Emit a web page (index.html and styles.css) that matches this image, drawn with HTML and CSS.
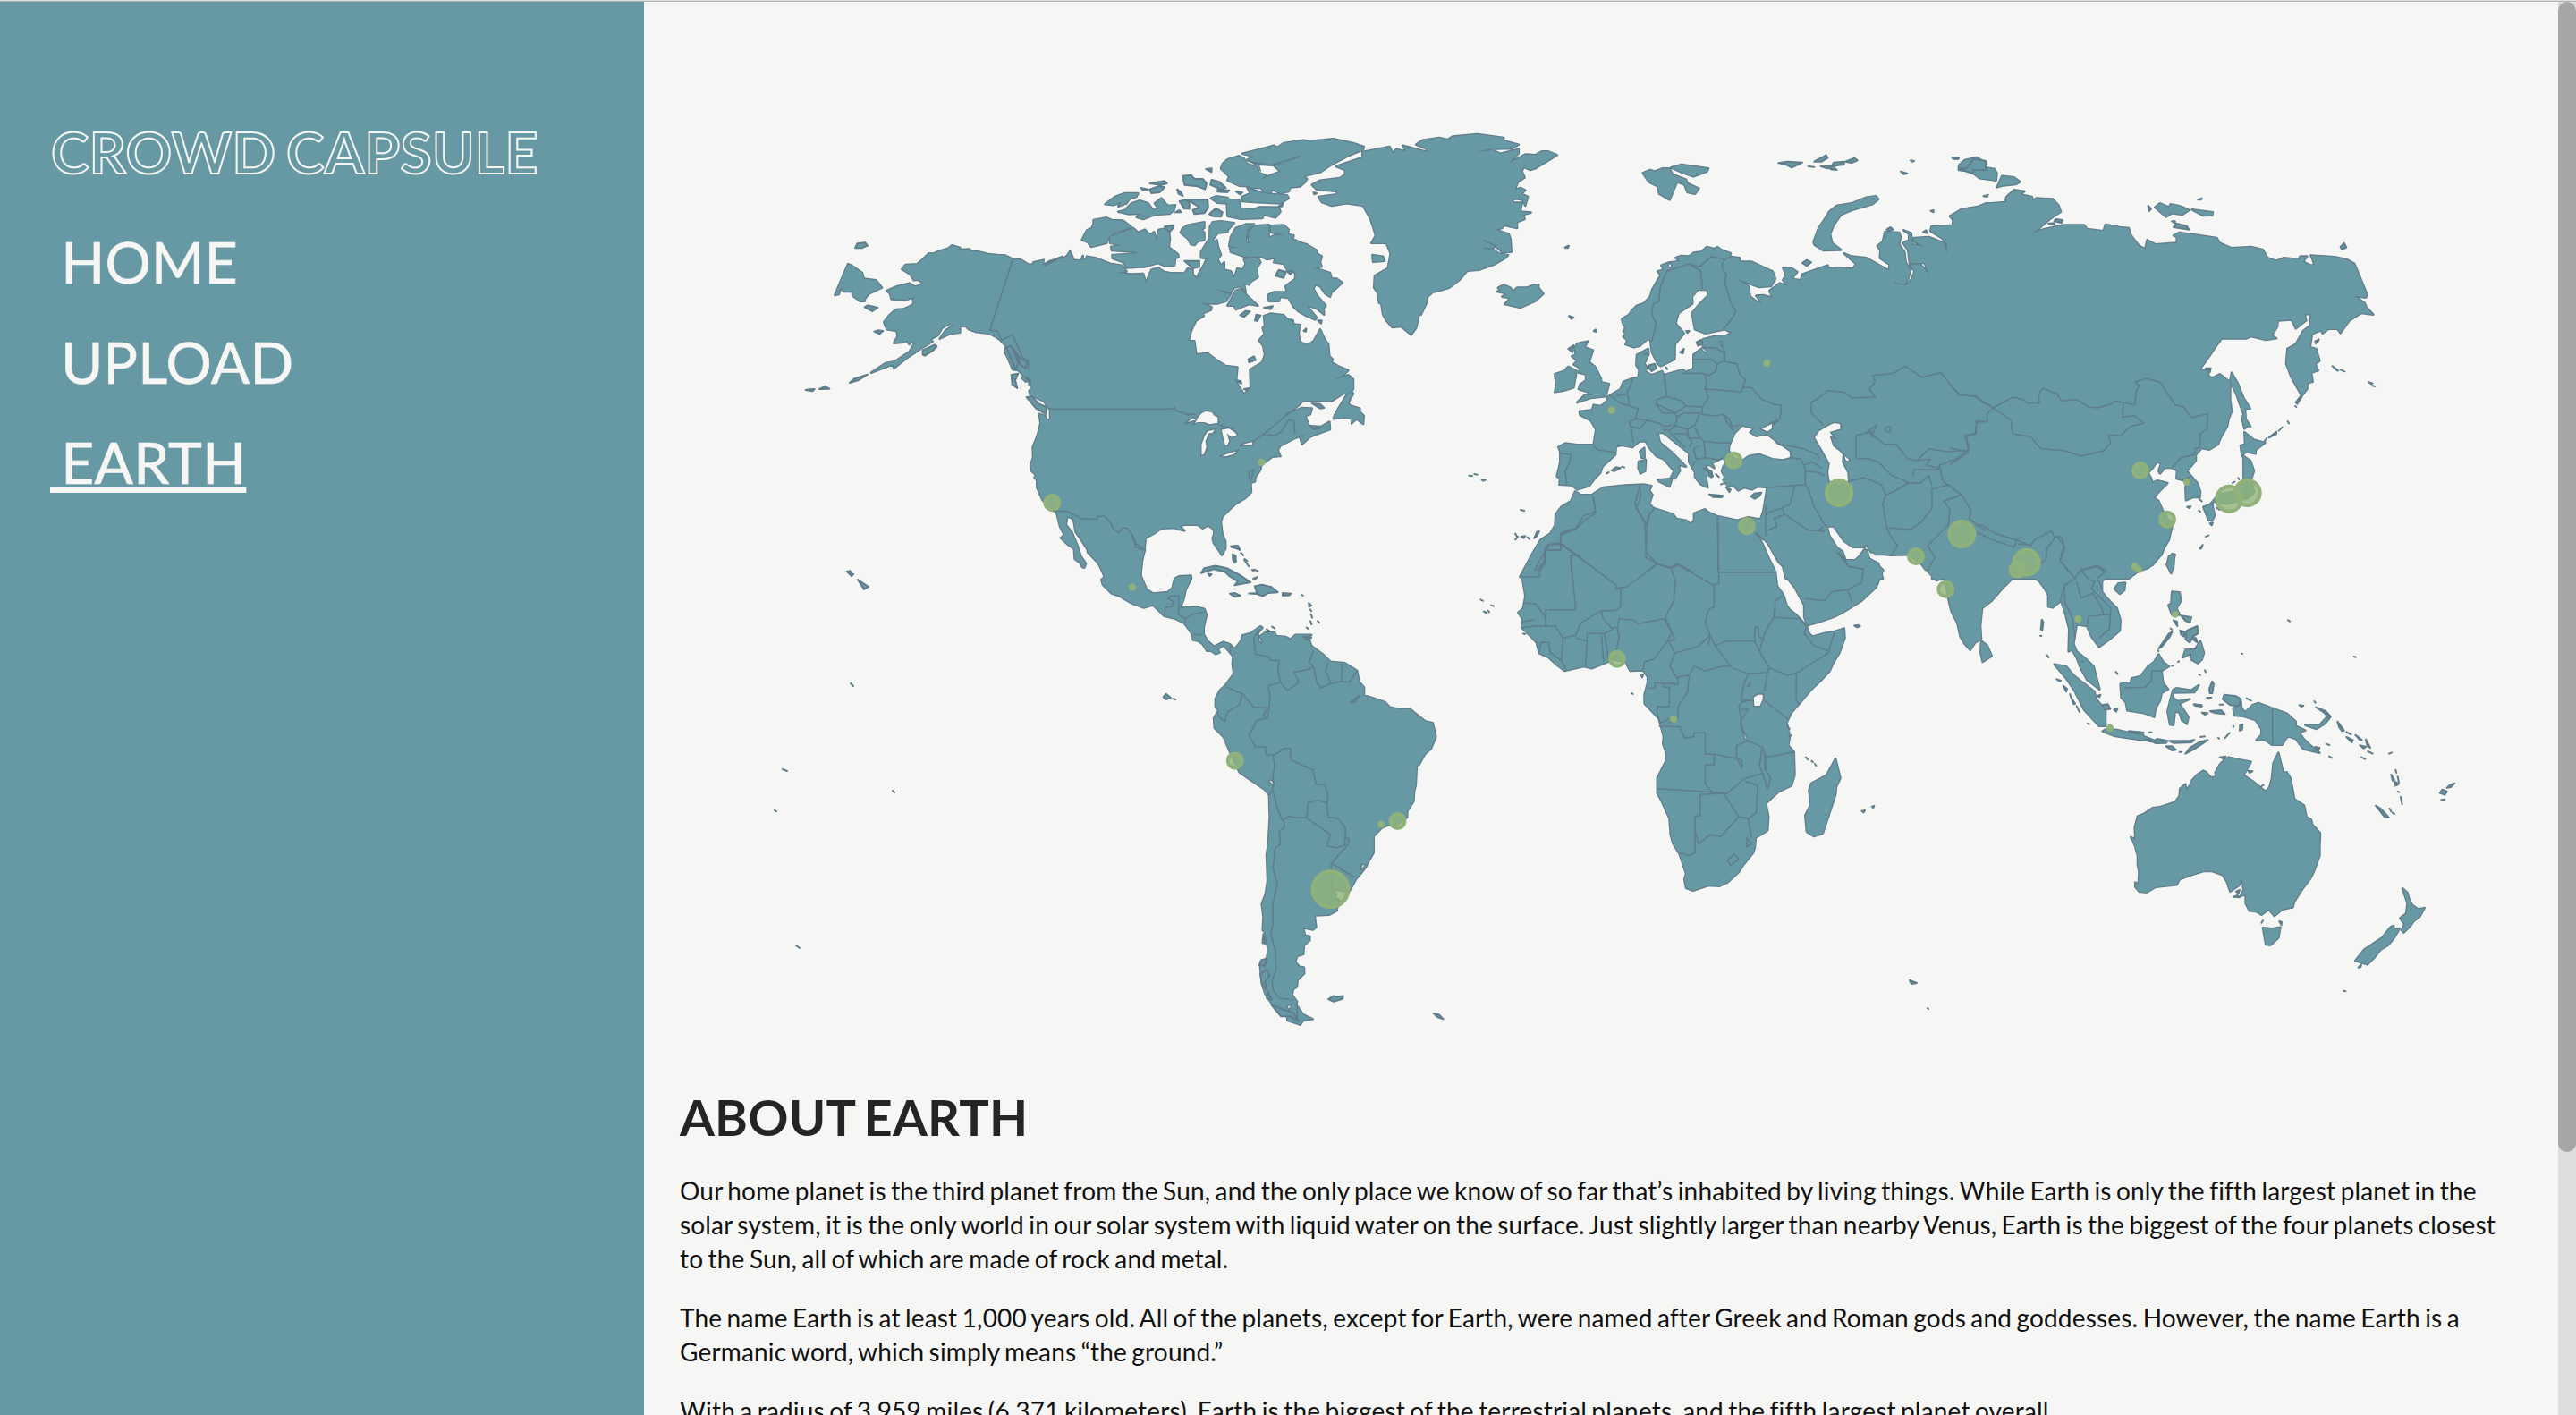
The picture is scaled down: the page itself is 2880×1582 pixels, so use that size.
FILE: index.html
```html
<!DOCTYPE html>
<html lang="en">
<head>
<meta charset="utf-8">
<title>Crowd Capsule - Earth</title>
<link rel="stylesheet" href="styles.css">
</head>
<body>
<div class="topline"></div>
<div class="page">
<aside class="sidebar">
  <h1 class="brand">CROWD CAPSULE</h1>
  <nav class="nav">
    <a class="nav-link">&nbsp;HOME</a>
    <a class="nav-link">&nbsp;UPLOAD</a>
    <a class="nav-link active">&nbsp;EARTH</a>
  </nav>
</aside>
<main class="content">
<svg class="map" viewBox="720 2 2140 1198">
<defs>
<g id="land" class="shape">
  <!-- Alaska, western Canada and the US -->
  <g transform="translate(880 140) scale(.33333)">
    <path d="M385 483 397 468 436 466 455 450 475 430 490 431 505 424 540 413 553 403 580 411 578 417 612 416 618 423 640 424 675 432 710 436 730 436 757 449 785 452 812 468 826 466 826 460 860 452 857 470 880 456 932 444 940 436 949 423 962 452 985 455 992 438 992 452 1010 445 1040 448 1075 464 1100 470V1380L1140 1400 1170 1400 1200 1424 1190 1460 1186 1500 1185 1530 1075 1530 1058 1492 1040 1465 1008 1432 1008 1415 990 1395 968 1365 960 1320 940 1312 935 1340 955 1365 974 1410 985 1445 1002 1470 997 1484 990 1482 985 1470 965 1455 962 1420 940 1405 918 1384 930 1375 915 1345 905 1305 900 1295 880 1290 862 1262 857 1258 838 1215 838 1190 830 1183 833 1172 820 1160 817 1138 825 1115 824 1080 840 1040 850 1000 845 968 865 975 872 993 882 985 882 955 860 925 815 905 812 890 825 880 812 870 818 850 800 860 790 850 792 838 775 822 757 820 740 780 730 760 733 740 712 718 700 710 675 698 635 694 610 685 600 675 580 673 580 695 545 700 512 716 530 690 560 668 545 666 520 680 505 705 480 718 488 725 440 755 400 782 358 815 355 802 282 830 330 798 360 793 410 760 425 735 420 723 410 735 400 722 390 728 358 731 370 708 368 690 335 685 330 675 325 660 345 635 365 618 390 617 410 608 424 600 422 585 430 575 400 585 350 583 345 565 335 555 370 540 410 530 430 542 457 532 440 518 425 520 413 500z"/>
    <path d="M204 466 215 470 252 495 258 520 262 515 298 520 318 545 275 565 262 580 260 590 245 590 220 572 218 558 190 558 178 545 174 567 160 570z"/>
  </g>
  <!-- Eastern North America, Arctic islands and Greenland -->
  <g transform="translate(1180 140) scale(.36990 .33333)">
    <path d="M60 453 90 455 95 440 120 445 165 464 200 470 215 490 190 495 230 500 265 498 275 534 280 510 290 485 310 478 330 492 345 495 390 497 400 480 415 485 415 500 430 515 432 500 448 470 460 440 470 400 488 385 492 410 500 435 490 450 500 470 510 460 510 485 530 490 540 512 550 480 565 485 575 465 570 450 590 442 615 450 620 460 608 480 612 510 590 525 585 535 570 530 575 560 560 540 540 545 530 562 505 555 485 548 515 565 530 566 515 590 490 598 478 598 437 597 472 610 470 620 445 632 448 640 425 655 410 690 403 724 420 724 425 768 460 765 490 790 515 807 550 812 546 860 570 903 590 880 588 820 625 795 633 770 628 740 615 722 632 700 626 680 633 672 630 640 650 632 690 637 700 650 718 655 720 668 740 670 735 695 738 725 758 738 765 735 780 725 800 685 815 720 825 735 828 775 838 785 835 795 855 808 885 822 870 838 838 857 885 838 900 852 900 885 885 900 870 900 835 925 748 925 735 940 705 965 690 985 710 965 745 948 775 950 770 970 755 975 765 1005 775 1015 805 1010 828 995 830 1020 770 1045 745 1070 740 1050 758 1035 720 1052 680 1075 672 1090 680 1110 655 1112 640 1125 622 1140 620 1155 605 1180 603 1195 590 1200 592 1230 575 1250 545 1270 525 1290 505 1312 500 1330 505 1375 514 1395 514 1420 503 1442 490 1420 478 1400 475 1385 480 1370 478 1355 462 1342 445 1352 430 1340 390 1340 375 1345 390 1360 372 1355 360 1350 320 1352 300 1368 272 1385 268 1424 262 1460 255 1530H155L110 1420 90 1330 60 1300z"/>
    <path d="M165 375 235 345 250 360 270 350 280 362 290 365 298 358 305 388 312 350 330 347 343 355 346 380 343 410 370 432 372 442 362 447 360 470 330 472 310 462 270 475 215 478 205 460 172 446 172 435 250 430 235 424 170 420 168 408 200 402 165 395z"/>
    <path d="M115 318 155 310 170 318 205 320 230 342 180 360 160 378 155 395 108 408 98 392 80 385 95 352 110 345 115 330z"/>
    <path d="M190 290 210 285 230 262 255 253 280 262 295 285 312 280 300 262 320 245 333 262 340 270 362 268 358 285 345 297 300 300 265 315 245 308 260 296 220 298z"/>
    <path d="M150 265 180 240 210 228 250 228 245 240 225 245 215 262 190 272 200 258 175 268z"/>
    <path d="M378 360 385 345 400 335 450 325 450 345 440 350 450 360 450 385 430 390 420 402 410 400 400 380z"/>
    <path d="M465 380 467 340 475 325 500 322 540 328 522 350 520 358 490 362 475 385 488 400 500 435 480 450 440 445 440 425z"/>
    <path d="M525 405 530 375 545 345 575 332 600 332 580 350 575 390 585 397 582 360 600 338 645 334 645 378 660 370 695 367 652 360 650 337 690 335 705 350 702 365 720 370 718 382 745 395 760 400 790 420 790 430 805 440 800 460 805 475 780 478 830 495 835 515 850 515 867 528 835 560 830 575 815 565 800 540 785 535 780 548 790 570 817 605 810 615 812 635 790 615 758 603 790 645 785 652 760 640 735 625 720 610 705 580 680 575 675 590 645 590 642 570 660 560 700 560 695 540 725 515 725 495 700 485 690 465 660 460 665 445 640 450 620 440 570 440 530 425 527 412 552 410z"/>
    <path d="M565 240 590 228 580 210 620 225 640 230 700 235 705 245 680 262 600 258 565 255z"/>
    <path d="M470 245 485 238 520 243 525 250 555 250 560 280 600 282 615 275 675 275 680 290 665 310 630 300 625 312 560 314 520 305 518 262 490 260z"/>
    <path d="M500 145 505 130 520 115 555 103 570 112 580 130 610 140 615 160 635 168 600 205 555 203 520 185 525 172z"/>
    <path d="M565 95 620 80 660 68 670 75 690 60 750 50 765 54 840 46 900 60 932 72 930 82 880 105 830 135 800 158 750 170 760 180 755 190 740 205 710 208 705 222 680 228 655 215 650 228 630 225 622 210 590 210 585 200 640 172 680 155 660 135 715 128 650 133 605 130 580 115 600 105z"/>
    <path d="M848 138 928 108 928 90 1010 72 1020 95 1030 80 1060 88 1050 68 1125 90 1120 78 1090 65 1110 50 1160 42 1185 48 1200 38 1275 30 1355 42 1350 50 1400 65 1380 78 1310 80 1265 92 1320 84 1345 95 1400 80 1400 95 1368 128 1420 98 1450 100 1470 88 1490 88 1516 100 1450 145 1435 150 1415 140 1410 155 1418 175 1398 190 1388 218 1405 210 1420 218 1408 230 1428 240 1420 270 1412 250 1378 245 1385 260 1410 260 1405 290 1437 293 1415 300 1418 315 1395 325 1395 345 1355 335 1350 345 1330 350 1370 365 1375 380 1378 425 1350 425 1330 405 1320 415 1340 430 1368 436 1360 445 1330 465 1280 485 1245 488 1220 520 1190 545 1160 555 1140 560 1125 575 1120 600 1105 635 1100 630 1090 680 1075 703 1045 675 1018 678 1000 655 990 635 985 600 978 595 973 560 963 545 965 505 1005 480 1013 430 1000 395 955 395 968 370 960 340 950 310 930 270 880 262 835 270 805 258 795 240 850 232 850 222 790 215 775 200 800 185 860 177 875 165 875 150z"/>
    <path d="M1335 558 1345 552 1338 545 1355 535 1375 545 1382 558 1395 545 1425 545 1445 535 1460 535 1460 545 1475 565 1450 590 1405 612 1358 600 1375 580 1350 575 1365 565z"/>
    <path d="M840 985 845 970 855 950 880 905 895 893 900 900 885 930 890 940 920 950 920 962 932 975 930 1002 910 985 895 1000 897 985 870 980z"/>
    <path d="M520 605 545 555 560 550 580 572 612 605 585 600 545 618 540 605z"/>
    <path d="M958 435 990 440 995 455 960 458z"/>
  </g>
  <!-- Mexico to Tierra del Fuego -->
  <g transform="translate(1100 600) scale(.35714 .36990)">
    <path d="M300-15 308 15 325 40 345 62 368 95 378 122 368 130 372 145 400 172 425 180 460 200 500 215 530 207 565 240 600 248 628 262 652 295 655 312 670 315 685 325 698 345 712 345 725 355 738 350 732 340 750 328 770 350 780 362 778 385 782 415 755 450 738 465 725 490 725 515 735 525 720 548 722 578 750 605 770 650 785 680 800 712 850 745 880 765 893 782 895 850 890 930 885 960 888 1040 882 1080 870 1110 875 1150 873 1190 880 1195 890 1250 885 1275 865 1300 868 1325 870 1350 880 1380 900 1410 925 1435 950 1452 950 1462 990 1475 1000 1462 1030 1458 1000 1445 978 1415 980 1405 965 1385 968 1368 980 1360 982 1340 1003 1320 1002 1302 988 1300 975 1285 980 1268 1000 1262 1002 1235 1020 1220 1020 1208 1005 1205 1000 1182 1030 1188 1040 1180 1035 1145 1080 1143 1105 1130 1110 1100 1095 1092 1115 1085 1145 1070 1165 1035 1195 1000 1205 980 1220 955 1220 905 1245 880 1265 872 1290 872 1325 848 1325 830 1345 800 1347 770 1352 750 1355 690 1362 690 1380 658 1400 640 1415 605 1405 563 1382 558 1335 522 1300 522 1270 515 1255 500 1210 485 1190 480 1190 455 1175 440 1168 405 1130 382 1085 378 1060 355 1025 330 1020 315 1000 312 1025 297 975 297 960 310 945 303 915 300 910 290 880 290 865 300 872 318 868 325 860 315 858 292 872 275 865 271 835 292 810 298 805 315 785 340 770 325 750 318 720 332 700 315 688 295 688 275 697 235 690 218 665 212 615 215 625 190 632 160 650 125 648 118 610 120 597 127 590 155 575 168 530 172 510 160 490 115 490 75 503 40 505 10 500-15z"/>
  </g>
  <!-- Europe, Turkey, western Russia -->
  <g transform="translate(1700 140) scale(.33333)">
    <path d="M130 1205 133 1185 122 1178 133 1130 133 1095 127 1080 150 1067 190 1072 245 1072 253 1020 235 990 200 972 198 960 240 955 245 938 270 942 290 925 293 910 335 885 345 860 375 850 395 845 398 820 388 805 390 770 428 750 430 768 415 800 425 812 418 825 440 838 475 825 480 838 545 820 555 828 580 815 580 770 605 752 620 765 627 755 612 745 612 718 650 708 690 705 710 697 685 685 620 698 585 685 575 630 600 600 630 570 625 552 595 552 575 575 577 598 530 630 520 665 548 698 518 735 517 785 470 808 460 800 440 760 435 720 425 718 400 740 380 745 352 735 358 722 345 710 352 700 345 690 352 680 343 665 340 650 365 635 372 622 390 605 412 598 435 575 440 555 462 515 470 505 460 490 480 485 472 470 500 460 490 475 510 480 505 460 535 455 520 445 538 438 565 440 580 428 605 425 625 408 650 415 660 408 672 418 705 430 700 440 735 445 735 458 775 458 845 490 855 515 840 540 800 543 725 515 765 540 770 575 790 590 810 597 790 572 815 570 845 578 835 555 870 530 895 540 880 520 890 500 880 478 910 480 928 492 910 515 940 520 945 500 1030 470 1035 480 1060 478 1115 482 1125 465 1085 430 1110 440 1160 445 1235 487 1238 468 1205 445 1207 420 1197 405 1215 390 1222 358 1270 360 1275 375 1270 400 1288 425 1292 460 1308 485 1300 515 1290 532 1265 530 1250 522 1255 530 1295 537 1312 515 1322 490 1305 468 1340 465 1370 500 1355 462 1305 462 1300 420 1283 395 1303 385 1303 365 1285 352 1310 362 1315 400 1355 408 1320 390 1320 378 1370 375 1420 395 1430 430 1430 400 1415 380 1375 355 1378 340 1465 335 1440 305 1480 282 1530 275 1560 262 1620 262V1520H1400L1375 1490 1358 1490 1320 1440 1240 1442 1175 1432 1160 1405 1150 1415 1115 1415 1085 1395 1050 1345 1028 1345 1035 1375 1070 1430 1085 1458 1120 1460 1145 1440 1162 1425 1170 1455 1200 1470 1215 1520H890L880 1480 865 1465 820 1385 790 1370 805 1320 822 1275 828 1215 795 1212 775 1222 750 1215 730 1225 715 1210 695 1210 680 1190 685 1180 675 1160 680 1145 690 1130 680 1115 650 1130 640 1130 650 1150 635 1140 620 1140 640 1180 625 1170 622 1180 628 1215 605 1205 585 1180 585 1165 565 1130 565 1100 520 1065 490 1040 475 1030 460 1035 468 1065 505 1095 555 1145 530 1140 535 1158 518 1185 505 1180 515 1160 480 1120 455 1110 430 1080 420 1060 400 1060 375 1080 340 1073 320 1078 318 1105 275 1145 268 1165 245 1190 230 1210 190 1222 170 1207z"/>
    <path d="M190 930 215 905 240 905 225 895 195 885 200 870 220 855 218 835 195 830 200 815 178 802 190 790 172 775 185 770 182 745 190 732 225 725 215 745 243 755 230 795 250 810 270 850 270 862 297 868 285 910 235 915z"/>
    <path d="M115 895 120 870 115 835 145 825 160 810 188 825 178 880 145 890z"/>
    <path d="M983 390 1000 345 1010 330 1030 300 1035 290 1060 270 1110 262 1160 242 1192 238 1200 248 1180 265 1110 285 1075 300 1050 335 1038 365 1045 395 1075 418 1015 420 985 400z"/>
    <path d="M410 160 435 150 450 155 475 145 500 145 510 165 555 182 560 195 598 212 585 230 560 225 550 200 525 190 500 250 465 230 460 205 430 190z"/>
    <path d="M505 142 540 132 630 145 625 155 580 172 545 160z"/>
    <path d="M460 1190 508 1185 500 1212 465 1195z"/>
    <path d="M396 1128 420 1122 418 1160 402 1168 395 1150z"/>
    <path d="M400 1095 415 1082 416 1115 405 1115z"/>
  </g>
  <!-- Siberia, Mongolia, China, Korea, Japan -->
  <g transform="translate(2180 140) scale(.33333)">
    <path d="M10 320 15 300 40 282 100 272 140 262 185 258 190 240 215 217 250 222 235 232 275 240 278 252 290 245 345 248 365 270 372 290 335 315 300 345 275 362 310 350 380 335 450 335 460 348 515 355 522 333 570 342 600 345 605 365 615 380 635 405 655 415 662 385 690 400 760 395 762 375 750 370 770 360 840 370 895 378 905 395 945 412 1010 408 1050 418 1065 445 1095 455 1120 445 1170 450 1175 440 1198 440 1185 458 1210 470 1222 468 1215 445 1210 437 1290 442 1330 450 1357 465 1400 570 1395 578 1355 572 1390 595 1398 612 1420 635 1380 630 1340 655 1310 697 1300 683 1270 683 1250 698 1245 688 1215 700 1208 745 1228 750 1240 790 1225 800 1235 822 1212 830 1217 860 1200 865 1198 885 1180 908 1165 880 1145 845 1128 800 1132 750 1160 735 1185 690 1208 672 1210 635 1190 632 1195 655 1160 682 1150 660 1145 652 1100 655 1098 675 1080 705 1095 715 1060 720 1010 708 995 715 960 715 912 715 890 745 870 775 838 820 870 825 865 840 880 848 905 835 940 862 940 920 945 960 935 985 930 1010 905 1055 900 1070 870 1088 845 1083 825 1105 825 1125 795 1160 830 1200 840 1230 838 1248 815 1248 792 1258 790 1215 795 1195 760 1185 762 1158 740 1148 720 1150 705 1168 700 1160 708 1135 695 1128 680 1150 665 1165 675 1185 680 1200 695 1192 730 1200 700 1230 685 1250 700 1260 715 1295 745 1345 735 1390 720 1415 700 1450 680 1475 640 1490 600 1520H-60L10 1300z"/>
    <path d="M945 830 965 865 985 915 1007 950 990 950 992 985 1008 1010 998 1008 988 1018 980 985 985 970 960 900 940 860z"/>
    <path d="M988 1030 1020 1055 1057 1065 1025 1090 1025 1102 992 1095 980 1110 975 1075 990 1070z"/>
    <path d="M985 1110 1008 1125 1020 1160 1010 1190 1020 1230 1000 1250 930 1270 885 1262 870 1275 900 1240 950 1230 985 1190z"/>
    <path d="M850 1280 880 1270 888 1310 880 1325 868 1325z"/>
    <path d="M735 1445 755 1440 740 1498 728 1475z"/>
    <path d="M30 135 50 117 90 108 118 125 110 140 150 147 157 160 155 185 100 178 70 155 30 150z"/>
    <path d="M158 208 175 170 215 175 235 190 220 198 180 202z"/>
    <path d="M688 275 705 262 735 275 740 265 775 272 802 285 780 300 745 295 725 307z"/>
    <path d="M812 283 882 292 880 302 850 303z"/>
  </g>
  <!-- Africa and Arabia -->
  <g transform="translate(1660 500) scale(.35714 .33333)">
    <path d="M283 148 300 160 335 160 370 135 440 128 500 125 522 130 515 145 525 160 515 190 530 205 590 225 600 240 630 245 645 258 655 245 655 222 690 208 700 218 725 230 790 245 825 235 865 242 850 285 870 325 888 370 895 385 910 418 915 465 935 495 945 530 955 545 975 562 1008 600 1012 620 1025 635 1060 625 1095 618 1125 608 1127 640 1110 690 1090 725 1080 750 1050 785 1020 815 985 860 960 890 945 925 955 970 950 1000 968 1022 970 1100 960 1135 920 1155 880 1195 888 1240 885 1285 848 1310 845 1345 840 1360 810 1400 795 1425 760 1460 735 1472 700 1470 652 1487 630 1478 625 1450 630 1430 610 1365 590 1330 582 1300 578 1245 555 1190 540 1160 540 1110 568 1050 568 1025 558 995 560 970 545 910 500 860 500 830 510 790 510 770 495 748 455 750 440 720 400 712 385 720 335 742 310 735 250 750 225 730 200 705 170 690 162 655 140 630 115 605 118 575 105 555 120 540 127 500 118 440 110 435 150 355 175 310 205 290 220 262 222 225 240 200 270 180z"/>
    <path d="M885 130 1060 100V270L1068 285 1100 335 1120 350 1130 380 1165 378 1190 340 1200 370 1225 390 1247 412 1225 470 1195 500 1180 515 1120 555 1090 570 1050 585 1010 597 1000 570 1000 530 970 470 940 430 935 400 885 320 865 300 850 285 855 242 868 240z"/>
    <path d="M1098 1045 1113 1110 1100 1140 1098 1165 1075 1240 1058 1295 1030 1305 1008 1290 1003 1235 1020 1200 1015 1150 1022 1128 1070 1100z"/>
  </g>
  <!-- India, Indochina, Indonesia -->
  <g transform="translate(2100 450) scale(.33333)">
    <path d="M-10 510 100 510 145 540 185 555 165 565 195 597 215 590 215 568 225 600 235 660 245 700 265 740 275 785 290 810 308 830 325 805 345 792 342 750 348 690 380 665 415 625 450 590 500 570 540 600 555 620 570 645 570 685 585 688 612 665 625 700 640 760 638 835 650 830 665 855 678 890 700 930 742 962 722 885 690 855 665 835 655 810 665 745 700 750 715 785 740 820 775 795 810 765 812 730 800 690 770 660 750 635 750 600 770 580 820 580 860 570 905 555 950 510 980 430 985 400 920 380 600 200H-10z"/>
    <path d="M345 800 365 815 380 850 350 870 343 840z"/>
    <path d="M590 878 630 885 655 915 680 935 725 970 730 995 762 1030 762 1085 740 1085 690 1030 660 970 630 925z"/>
    <path d="M752 1103 765 1095 800 1098 830 1105 885 1108 890 1120 935 1138 870 1130 790 1118z"/>
    <path d="M812 945 825 940 845 945 850 925 880 918 905 885 925 870 940 845 955 870 975 885 950 900 955 940 972 962 950 975 945 1000 930 1025 925 1055 900 1045 890 1042 835 1033 830 1005 815 990z"/>
    <path d="M988 965 1000 958 1050 965 1075 948 1060 972 990 973 988 990 1005 1002 1045 995 1010 1010 1040 1055 1035 1078 1018 1065 1010 1040 995 1035 990 1082 978 1080 970 1035z"/>
    <path d="M985 635 1010 637 1015 665 1000 690 1010 712 985 712 973 680 982 675z"/>
    <path d="M1022 855 1030 830 1062 828 1080 800 1092 840 1085 862 1072 875 1050 862 1050 840z"/>
    <path d="M792 625 805 607 828 605 825 630 810 642z"/>
    <path d="M970 545 985 508 993 510 990 550 982 573z"/>
  </g>
  <!-- New Guinea, Australia, New Zealand -->
  <g transform="translate(2300 700) scale(.33333)">
    <path d="M560 245 595 235 615 245 618 275 630 290 655 265 675 258 720 275 770 293 800 320 800 335 832 350 812 358 828 380 840 392 880 425 825 412 800 378 775 370 765 380 755 398 720 398 695 380 668 382 685 365 685 345 665 315 625 302 595 300 590 275 605 270z"/>
    <path d="M247 708 262 715 260 675 270 638 290 630 320 610 345 607 395 590 410 570 412 545 430 530 432 550 445 535 450 520 470 498 490 485 500 490 515 508 535 505 530 492 545 465 560 450 575 440 610 448 650 455 625 500 655 520 680 540 700 555 712 540 720 510 725 460 742 425 758 492 770 490 782 510 790 550 795 580 828 602 836 640 852 650 855 665 882 695 880 740 880 770 862 820 850 845 820 885 795 925 790 943 755 950 728 972 710 950 685 968 670 958 645 955 632 930 632 900 615 905 625 885 620 845 610 870 580 890 570 860 555 835 520 822 490 822 440 838 410 850 400 868 330 875 300 893 275 890 262 875 262 860 272 868 275 825 270 800 270 770 262 740 255 722z"/>
    <path d="M690 1012 720 1015 748 1010 742 1045 715 1070 700 1068z"/>
    <path d="M1158 880 1175 895 1180 915 1190 935 1210 950 1232 945 1215 975 1195 990 1185 1005 1162 1028 1155 1020 1165 1000 1150 980 1170 965 1175 930z"/>
    <path d="M1118 1010 1128 1005 1130 1018 1148 1015 1130 1045 1110 1070 1085 1085 1065 1110 1040 1135 1000 1122 1030 1085 1090 1045z"/>
    <path d="M832 332 880 332 900 310 915 305 900 325 870 345z"/>
  </g>
</g>
</defs>
<use href="#land" class="coast"/>
<use href="#land" class="ground"/>

<g class="shape water">
  <g transform="translate(1180 140) scale(.36990 .33333)">
    <path d="M390 1002 415 980 425 985 440 965 455 957 475 962 480 972 492 978 492 1000 465 1005 450 998 430 998 415 1003 425 990z"/>
    <path d="M440 1108 440 1070 450 1040 460 1025 485 1018 475 1035 465 1035 455 1060 458 1080 450 1105z"/>
    <path d="M500 1020 525 1015 545 1030 550 1042 530 1048 522 1040 527 1060 520 1075 512 1075 505 1045z"/>
    <path d="M498 1110 515 1102 555 1088 540 1105 515 1113z"/>
    <path d="M555 1075 575 1065 598 1060 595 1072 575 1075z"/>
  </g>
  <g transform="translate(1700 140) scale(.33333)">
    <path d="M700 1090 702 1075 715 1045 718 1035 745 1008 755 1012 780 1018 768 1030 790 1045 825 1038 850 1055 862 1068 885 1080 905 1095 905 1115 880 1122 845 1118 800 1102 765 1108 745 1122 715 1115z"/>
    <path d="M805 1018 835 1003 865 993 845 1005 845 1018 828 1030z"/>
    <path d="M985 1048 1000 1025 1025 1010 1050 997 1073 1000 1075 1020 1040 1030 1055 1050 1040 1045 1050 1075 1075 1095 1082 1105 1080 1130 1098 1165 1100 1200 1080 1195 1035 1195 1030 1165 1035 1135 1010 1090z"/>
    <path d="M1085 1105 1105 1122 1095 1130 1087 1120z"/>
    <path d="M670 725 678 728 675 745z"/>
    <path d="M1175 1035 1183 1032 1183 1050z"/>
    <path d="M787 1368 795 1372 812 1388 808 1392z"/>
  </g>
  <g transform="translate(1660 500) scale(.35714 .33333)">
    <path d="M840 838 855 828 872 828 872 845 862 870 842 868z"/>
    <path d="M820 805 830 790 831 797z"/>
    <path d="M803 905 805 940 825 985 815 978 800 930z"/>
    <path d="M872 1010 880 1040 880 1085 876 1080 876 1040z"/>
  </g>
  <g transform="translate(1100 600) scale(.35714 .36990)">
    <path d="M892 738 900 735 908 748 902 750z"/>
    <path d="M1180 1005 1185 990 1195 992 1180 1010z"/>
    <path d="M948 1420 965 1412 955 1430z"/>
    <path d="M1087 1062 1100 1068 1120 1072 1134 1075 1128 1092 1114 1105 1112 1095 1102 1092 1105 1078z"/>
  </g>
</g>

<g class="shape isle">
  <g transform="translate(880 140) scale(.33333)">
    <path d="M228 412 235 397 262 394 270 404 250 412zM260 610 270 604 304 612 286 624zM292 692 305 688 322 690 310 700zM752 837 775 833 765 855 772 882 755 870zM803 912 822 910 845 935 870 945 870 970 835 950zM455 770 455 755 495 736 502 742 490 755 462 773zM210 864 225 850 270 836 240 855zM108 885 128 876 142 884zM62 888 75 886 92 885 85 892zM200 1497 212 1495 212 1500zM735 745 750 740 765 770 775 800 765 820 755 790zM760 750 780 780 805 795 800 815 785 805zM800 845 815 855 815 870zM865 470 885 455 915 443 925 440z"/>
  </g>
  <g transform="translate(1180 140) scale(.36990 .33333)">
    <path d="M455 147 472 145 472 157zM385 170 410 167 420 180 445 180 457 195 452 215 430 205 390 200zM468 200 472 183 495 190 515 210 500 215zM490 217 525 218 520 225 490 223zM545 222 565 225 558 232zM368 215 380 225 385 237 372 230zM285 195 330 187 337 195 320 200zM285 215 310 205 330 208 315 225 290 228zM258 210 280 215 265 218zM375 255 395 250 405 262 405 280 390 280zM400 250 460 250 462 275 450 295 420 298 415 285 435 275zM465 298 485 278 505 292 500 307 475 305zM330 340 355 335 355 345 345 358 335 350zM665 505 675 485 697 492 690 512zM700 490 718 490 710 500zM558 637 575 623 588 625 570 643zM603 655 607 635 620 638 610 657zM630 612 657 607 650 617zM750 690 758 682 757 692zM583 785 600 775 605 788 585 795zM546 856 560 858 562 867zM570 885 585 882 580 890zM775 933 800 935 812 948 800 950zM770 1008 800 1010 798 1018 780 1020zM793 655 805 655 803 665zM362 292 375 285 380 292zM390 455 435 455 435 475 415 480zM780 225 790 228 782 232zM675 272 688 262 685 272zM1540 410 1552 405 1548 412zM1552 640 1565 645 1560 650zM1250 1175 1260 1176zM1266 1170 1275 1172zM1288 1188 1300 1190 1293 1193zM1406 1290 1417 1293zM1390 1390 1398 1380zM1390 1370 1394 1378zM1408 1380 1420 1378 1415 1385zM1427 1382 1433 1388zM1447 1385 1455 1365 1462 1362 1455 1378zM535 1440 545 1445 545 1465 537 1460zM530 1412 545 1410 557 1425 550 1420zM560 1435 568 1442zM572 1455 580 1462zM578 1470 585 1480zM600 1490 612 1495z"/>
  </g>
  <g transform="translate(1100 600) scale(.35714 .36990)">
    <path d="M680 110 690 95 725 88 760 95 800 115 835 138 785 147 795 135 770 120 755 107 720 98zM702 112 713 114 707 119zM770 172 785 170 803 178 785 182zM830 172 855 170 848 150 870 145 900 152 920 168 890 170 873 180 855 173zM935 170 962 172 955 178 935 178zM995 176 999 178zM1017 200 1025 208 1018 212zM1022 220 1025 225zM1024 235 1028 245zM1022 255 1026 265zM1010 275 1015 278zM1045 255 1050 260zM902 272 910 277zM885 280 893 285zM1000 302 1025 305 1015 312zM562 485 570 475 585 487 570 492zM592 490 600 492zM1078 1398 1095 1388 1105 1390 1125 1388 1122 1397 1095 1405zM1408 1441 1425 1445 1438 1458 1420 1452zM1555 190 1562 194zM1565 226 1570 230zM1148 500 1175 480 1160 500zM875 1200 882 1230 872 1228zM868 1280 885 1275 880 1297 862 1295zM865 1320 885 1310 895 1325 880 1345 885 1370 870 1350zM890 1375 900 1400 885 1395zM900 1415 940 1430 970 1440 985 1465 960 1450 930 1450zM783 55 789 75 785 78 780 65zM776 32 795 27 801 38zM806 50 812 56zM815 70 822 80zM843 127 856 122 850 128zM840 100 845 104z"/>
  </g>
  <g transform="translate(1700 140) scale(.33333)">
    <path d="M865 127 895 122 945 125 930 132 910 142 890 132zM985 122 1010 108 1025 100 1030 110 1010 122zM965 138 985 140zM1007 138 1045 135 1050 125 1085 122 1085 132 1060 135 1030 145zM1090 122 1120 110 1130 118 1110 126zM1040 148 1055 145 1060 150zM1308 118 1320 120 1312 122zM1275 155 1297 162 1285 164zM1448 108 1470 110 1465 114 1450 112zM1470 145 1495 145 1520 112 1560 120 1560 150 1520 150 1515 162zM1375 287 1385 285 1385 292zM1228 350 1240 342 1250 350 1235 355zM945 462 960 452 975 460 960 472zM1350 358 1360 352 1365 362zM590 728 605 720 608 735 595 740zM535 762 548 750 545 765zM555 690 566 690 560 697zM415 768 425 765zM432 805 450 800 455 815 440 825 430 815zM488 812 492 818zM165 640 178 645 170 648zM245 690 252 685 253 693zM160 750 178 738 175 762zM633 1238 680 1243 675 1248 645 1247zM772 1245 785 1235 808 1232 800 1245 785 1253zM305 1158 320 1147 335 1150 315 1160zM288 1168 296 1164zM340 1145 348 1148zM615 1150 640 1160 645 1178zM655 1170 665 1180zM690 1215 705 1222 700 1230zM672 1205 685 1200zM150 410 160 404 158 412z"/>
  </g>
  <g transform="translate(2180 140) scale(.33333)">
    <path d="M8 108 30 110 25 114 10 112zM112 238 128 233 125 240zM832 250 845 245 842 250zM665 270 675 280 668 288zM745 322 755 322 757 330zM750 342 762 330 795 338 802 350 770 345zM1310 408 1322 395 1330 410 1315 417zM355 315 378 318 375 328 350 322zM330 330 350 328 352 335zM1225 725 1238 718 1235 725 1227 732zM1283 808 1302 823 1298 823zM1310 820 1324 826zM1405 862 1418 866 1412 868zM1417 874 1426 876zM1160 930 1175 910 1180 912 1165 935zM1158 942 1162 945zM1133 993 1137 1000zM1103 1025 1115 1013zM1070 1048 1095 1028 1095 1035zM1055 1060 1063 1050zM795 1280 808 1278 803 1284zM838 1255 845 1262zM948 1200 955 1196zM967 1183 970 1188zM835 1292 840 1296zM895 1283 905 1290zM872 1335 882 1333 878 1342zM858 1380 868 1376zM838 1420 848 1407 843 1420zM858 815 875 815 872 828z"/>
  </g>
  <g transform="translate(1660 500) scale(.35714 .33333)">
    <path d="M488 765 496 762 493 772zM460 825 464 828zM1157 598 1170 597 1175 600 1165 604zM1005 1040 1012 1048zM1023 1052 1027 1056zM1033 1062 1037 1068zM1180 1220 1190 1218 1186 1225zM1212 1205 1219 1203 1216 1209zM0 553 6 555zM10 548 14 553zM20 530 28 533zM120 625 126 627zM948 935 954 945zM953 970 960 967z"/>
  </g>
  <g transform="translate(2100 450) scale(.33333)">
    <path d="M548 728 553 735 550 765 545 762zM543 782 547 783zM566 848 571 855zM598 928 612 933 608 935zM620 950 633 960 630 970zM643 978 646 990zM648 992 660 1010 655 1012zM665 1018 675 1038zM702 1077 707 1079zM797 903 802 910zM940 825 975 775 985 770 978 785 950 820zM938 832 940 834zM750 1015 770 1012 778 1028 760 1030zM790 1030 802 1027 798 1037zM732 985 745 980 742 988zM1015 715 1050 720 1045 738 1030 732zM990 730 1002 735 1003 750zM1012 765 1030 770 1025 785 1015 778zM1035 765 1070 750 1072 775 1055 785 1045 805 1030 795zM1050 790 1065 790 1070 805zM980 758 985 762zM1005 870 1008 868zM985 884 990 882zM1075 912 1080 914zM1095 898 1098 905zM1110 960 1120 935 1125 945 1120 975 1112 975zM1102 990 1117 990 1110 994zM1155 995 1160 980 1200 985 1215 995 1210 1018 1180 1015zM1235 992 1250 1000zM1058 1012 1085 1015 1085 1020 1062 1017zM1085 1040 1105 1042 1095 1047zM1113 1035 1150 1032 1162 1045 1130 1042zM1145 1013 1157 1013zM1212 1100 1213 1082 1222 1080 1220 1098zM1163 1125 1178 1108zM1190 1085 1192 1087zM1140 1125 1143 1127zM895 1130 910 1128 915 1138zM920 1138 935 1128 970 1135 965 1142 930 1143zM975 1135 1040 1135 1060 1132 1050 1140 990 1142zM965 1153 985 1153 998 1165 985 1167zM1030 1178 1045 1158 1075 1140 1105 1132 1060 1162zM840 1102 890 1107 870 1112zM908 1106 917 1106zM1080 1122 1095 1120zM1010 1172 1018 1172zM1218 842 1221 843zM1374 730 1380 734z"/>
  </g>
  <g transform="translate(2300 700) scale(.33333)">
    <path d="M995 102 1001 104zM812 265 826 267 818 270zM862 252 866 257zM868 272 900 285 917 303 912 310 895 290zM940 320 962 350 955 352 945 338zM970 355 985 363zM970 372 992 382 988 390zM1000 365 1022 382 1015 382zM1015 400 1035 405 1028 410zM1035 380 1050 408 1040 402zM1042 420 1058 428zM1020 440 1033 446zM1113 428 1122 424zM902 395 913 399zM912 437 921 442zM1120 498 1130 515 1125 518zM1130 520 1145 530 1135 535zM1135 482 1138 492zM1142 505 1146 525zM1142 555 1147 557zM1152 573 1157 598zM1068 602 1085 612 1112 642 1098 640zM1115 612 1120 622zM1125 626 1131 630zM1283 560 1292 548 1307 555 1300 566zM1307 542 1318 532 1333 527 1320 540zM1288 583 1300 581zM685 995 690 987zM745 990 753 993 752 1003zM1010 1145 1020 1135 1018 1143zM960 1223 967 1225zM545 440 565 437 560 446zM640 485 655 487 645 492zM590 908 605 903 612 910zM600 890 612 885 608 897zM680 540 692 533zM865 405 880 408 875 418z"/>
  </g>
  <path d="M948 640 954 642 952 644zM959 648 971 656 966 659zM951 764 954 767zM998 884 1000 886zM875 860 880 862zM866 906 868 907zM890 1057 894 1060zM2135 1096 2143 1099 2137 1100zM2155 1127 2156 1128z"/>
</g>

<g class="shape border">
  <g transform="translate(880 140) scale(.33333)">
    <path d="M757 449 680 688 705 690 720 722 755 702 775 745 790 780 810 790 808 820M880 952H1295L1298 943 1302 957 1330 965 1345 972 1370 970M900 1295 938 1294 990 1321H1038L1042 1312H1066L1090 1340 1092 1352 1112 1367 1125 1350 1142 1352 1155 1370 1170 1415 1198 1424"/>
  </g>
  <g transform="translate(1180 140) scale(.36990 .33333)">
    <path d="M390 970 420 968M492 1005 540 1018M598 1060 625 1040 668 1040 685 1025 705 988 720 992 725 1035M625 1040 680 990 705 962M585 1190 585 1162 600 1155 590 1195M1568 1355 1545 1358 1528 1370 1527 1424H1478V1470L1455 1495M1478 1424 1490 1407 1527 1405M1293 385 1330 405M1293 412 1325 415M580 120 650 135 740 105M615 135 620 155"/>
  </g>
  <g transform="translate(1100 600) scale(.35714 .36990)">
    <path d="M463-10 475 20 503 40M565 240 568 215 590 210 592 195 577 188 583 180H610V212L622 210M610 215 608 235 632 248 650 235 690 228M632 248 628 262M655 295 685 297M770 350 772 328M865 280 845 305 850 355 888 362 898 373 925 375 920 400 928 440 890 450 895 480 893 520 888 548 875 540 888 518 845 515 810 475 760 455M928 440 950 465 980 445 985 435 970 410 1020 400 1030 392 1018 380 1032 345M1032 392 1042 440 1055 457 1085 445 1115 438 1145 440 1168 405M1085 445 1070 405 1078 378M1120 438 1122 385M808 478 800 508 762 530 755 558 735 545 732 530M888 548 855 555 830 600 850 635 882 635 882 658 910 660 940 640 960 640 960 675 1030 705 1040 748 1068 750 1078 780 1075 805 1045 797 1015 805 1010 850 1085 900 1073 935 1105 940 1130 932 1132 880 1110 852 1078 848 1073 805M905 660 910 690 905 725 908 745 902 768 893 782M905 768 918 820 935 858 955 845 985 850 1010 848M940 860 940 880 925 890 928 930 912 940 905 1000 918 1050 905 1110 905 1170 898 1200 912 1250 915 1310 902 1340 905 1370 925 1395 970 1400M1132 905 1143 915 1140 930 1087 988 1087 1060M1090 988 1160 1030M980 1410 982 1465"/>
  </g>
  <g transform="translate(1700 140) scale(.33333)">
    <path d="M133 1100 168 1105 165 1130 150 1160 155 1205M245 1075 262 1090 318 1098M300 905 330 930 360 940 395 950 385 985 365 995 372 1020 378 1065M320 908 355 902 378 850M360 905 365 940M365 995 372 1010 400 1018 425 990 465 1000 480 1010 520 1005 525 985 520 965 455 935 458 920 490 910 483 838M425 990 385 985M480 838 490 910 540 925 555 942 610 945 630 915 620 880 625 860 615 832H540M580 785 640 785 660 800 655 825 630 840 615 832M583 765 610 745 655 748 685 765 685 790 660 800M680 745 685 765M615 885 665 888 740 895 745 880 775 880 810 920 845 935 875 940 870 985 835 1000M745 880 755 855 735 835 725 800 685 793M455 935 475 965 520 965 555 942M525 980 545 965 600 965 610 972M610 945 608 970 655 975 680 970 700 985 710 1010 735 1005M680 970 695 1000 715 1025M600 970 585 1005 560 1020 525 1010 515 1010 500 1025 475 1020M585 1015 600 1045 615 1060 660 1065 705 1065M515 1035 555 1035 575 1065 565 1080M500 1030 550 1080M560 1020 565 1050 600 1050M615 1060 620 1115 590 1120 580 1085 600 1075M620 1115 660 1122 685 1115M585 1125 575 1150M440 635 445 600 465 590 468 545 490 490 565 465 605 490 610 550M440 635 455 665 440 725M565 465 600 475 640 440 685 450 710 440M685 450 675 470 690 505 685 525 705 595 722 625 715 640 680 685M975 965 975 930 1000 915 1030 890 1085 895 1110 915 1190 912 1170 885 1190 860 1180 840 1250 832 1290 808 1345 845 1410 830 1470 905 1525 908 1560 938M975 965 1015 1005M862 1068 950 1085 995 1105 1000 1120M905 1115 940 1120 950 1140 980 1130 1010 1150M950 1140 958 1160 1000 1165 1020 1175M955 1160 955 1205 830 1215M955 1205 965 1220 985 1280 1020 1340 1028 1345M920 1205 905 1270 875 1285 830 1300M878 1285 885 1305 965 1358 1020 1362M885 1305 850 1320 860 1345 820 1362M822 1275 822 1380M1125 1120V1040L1170 1030 1220 1070 1260 1070 1300 1120 1330 1125M1130 1118 1165 1118 1200 1130 1245 1175 1305 1200M1100 1195 1150 1182 1210 1205 1225 1240 1215 1270 1228 1350 1310 1355 1345 1330 1380 1285 1380 1220 1440 1205M1225 1240 1250 1230 1300 1200 1340 1200 1370 1175 1380 1210M1228 1350 1245 1385 1265 1410 1245 1440M1365 1490 1390 1450 1365 1410 1435 1340 1440 1290 1420 1260 1480 1240 1510 1290 1505 1320 1560 1360M1330 1125 1370 1085 1430 1095 1500 1090 1460 1120 1405 1140 1400 1155 1320 1155 1315 1180M1330 1125 1375 1120 1360 1140 1400 1150M1405 1140 1415 1190 1430 1205 1480 1240M1500 1085 1495 1045 1525 1035 1530 995 1560 995M242 1245 252 1300 215 1325 185 1355 135 1375V1424H82V1470L62 1500M135 1405 265 1500M170 1500V1443H200M82 1424 92 1408 135 1405M400 1208 402 1250 388 1285 425 1340 420 1430 458 1470 420 1500M425 1340 432 1305 448 1285M458 1470 505 1485 530 1473 580 1500M662 1310V1500M1060 1430 1100 1480 1150 1490"/>
    <circle cx="1233" cy="1019" r="9"/>
    <path d="M1160 1030 1180 1015 1195 1005 1185 1025z"/>
  </g>
  <g transform="translate(2180 140) scale(.33333)">
    <path d="M0 870 35 905 85 910 145 948 210 912 245 920 260 932 300 932 298 905 310 882 358 900 375 925 425 920 465 945 495 948 540 935 555 925 620 938 625 890 635 875 622 860 660 850 705 862 755 938 785 945 808 980 865 968 862 1020 840 1035 838 1080 822 1085 820 1105 775 1115 745 1148M145 948 205 990 210 1035 270 1045 305 1085 385 1092 440 1110 515 1092 540 1065 530 1040 575 1040 605 1010 650 1000 620 975 578 978 582 935M145 948 125 968 125 995 88 992V1035L48 1040 65 1075 60 1100 0 1138M0 1082 60 1095M780 1190 808 1178M88 1345 105 1340 155 1370 220 1390 270 1410 285 1390 340 1360 350 1380 375 1380 385 1420 370 1460 400 1500M90 1365 140 1390 215 1415 225 1390 240 1380M228 1405 275 1408M355 1380 325 1420 322 1460 300 1470M440 1500 450 1490 495 1480 520 1500"/>
  </g>
  <g transform="translate(1660 500) scale(.35714 .33333)">
    <path d="M111 435H172V400L188 380V345H237V320L205 325 190 345 155 415M237 320V290L285 272 310 230 347 215 340 165M237 320 410 462V475L445 468 540 392 505 370 502 260 470 190 485 128M505 262 515 225 530 208M540 392 580 405 600 392 718 465V535L700 545 690 590 705 630 700 665M728 235 733 458H718M733 420H910M582 402 597 450 592 515 565 570 595 645 575 650 595 690 665 670 705 630 720 665 770 735 740 735 690 750 655 735 640 765 605 770 605 795 530 790M410 475 425 478V535L410 548H365L300 590 285 630 245 640 220 600 160 600 115 605M268 362H292M268 362 285 545H190V570L160 525 120 522M190 570 190 602M118 585 158 578M365 548 370 575 400 610 375 625H320V650L285 640M400 605 415 605 420 640 405 715M375 625 388 720M365 628 372 720M320 650 315 735M245 640 240 715 255 748M240 715 205 690 200 655 175 655 170 690M415 605 420 575 465 580 480 592 560 575 585 620 575 645 530 710 500 720 495 748M595 690 580 735 605 780M605 795 580 790M510 808H533V790M560 790V805H578V870H540V895L548 925 580 910M640 765 635 820 605 870V905L575 925M545 935 610 938 625 975 655 972V958H690V1030H718V1065H690V1130L710 1155M720 1030 790 1045 805 1075V1050L788 1045V1000L825 985 868 1005 860 1070 870 1095 815 1110 760 1160 540 1145M760 1160 675 1165V1237H658V1360L640 1370 610 1360M660 1290 670 1330 705 1300 740 1305 795 1240 825 1245 850 1225 855 1135 815 1120M750 1165 795 1240M825 1245 835 1310M820 1310 835 1330 820 1340zM760 1385 780 1365 795 1380 770 1403zM870 1095 885 1145 895 1110 880 1085M882 1040 968 1022M803 905 795 870 805 855 835 848M805 880 825 880 805 910M875 850 950 912M835 848H803L810 800 825 760 775 740M825 760 885 755 875 820M885 755 890 740 950 765 980 755 1075 690 1095 620M975 760V850L985 862M1080 685 1030 665 1000 625 1008 600M890 740 860 685 875 625 905 570 985 575 1005 600M905 570 910 515 935 495M860 685 845 650H760L720 665M845 650V605L855 603 858 635 875 648M1000 508 1065 515 1085 485 1135 478 1180 455 1185 408 1140 400 1110 350M1135 478 1150 520M1045 280 1060 265"/>
  </g>
  <g transform="translate(2100 450) scale(.33333)">
    <path d="M610 665 625 612 660 590 610 530 622 480 600 450M660 590 680 560 735 548 765 565 735 590 750 625M680 560 700 590 725 600 715 625 780 690 775 760 740 790M665 600 680 655 720 640 750 690 755 712 705 718 700 750M755 712 780 712M625 612 625 670 650 720 660 790M675 870 690 868M825 958 895 955 915 935 918 900H955"/>
  </g>
  <g transform="translate(2300 700) scale(.33333)"><path d="M722 275V398"/></g>
</g>

<g class="dots">
  <circle cx="1176.300" cy="562" r="8"/><circle cx="1410.400" cy="517" r="2"/><circle cx="1266" cy="656.600" r="2"/>
  <circle cx="1380.700" cy="850.400" r="8"/><circle cx="1562.500" cy="918" r="8"/><circle cx="1544.300" cy="921.800" r="2"/>
  <circle cx="1487.500" cy="994.300" r="20"/><circle cx="1975.300" cy="406" r="2"/><circle cx="1801.700" cy="458.700" r="2"/>
  <circle cx="1938.300" cy="514.700" r="8"/><circle cx="2056" cy="551" r="14"/><circle cx="1953" cy="588.300" r="8"/>
  <circle cx="2142" cy="622" r="8"/><circle cx="2193.300" cy="597" r="14"/><circle cx="2393" cy="526" r="8"/>
  <circle cx="2445" cy="538.700" r="2"/><circle cx="2492.300" cy="557.700" r="14"/><circle cx="2512.700" cy="551" r="14"/>
  <circle cx="2423" cy="580.700" r="8"/><circle cx="2265.700" cy="628.700" r="14"/><circle cx="2255.700" cy="636.700" r="8"/>
  <circle cx="2386.700" cy="633.300" r="2"/><circle cx="2391" cy="636.700" r="2"/><circle cx="2175.300" cy="658.700" r="8"/>
  <circle cx="2323.300" cy="692" r="2"/><circle cx="2431.700" cy="686.700" r="2"/><circle cx="2359" cy="814" r="2"/>
  <circle cx="1807.900" cy="736.700" r="8"/><circle cx="1871" cy="803.700" r="2"/>
</g>
</svg>
<section class="about">
  <h2 class="about-title">ABOUT EARTH</h2>
  <p>Our home planet is the third planet from the Sun, and the only place we know of so far that’s inhabited by living things. While Earth is only the fifth largest planet in the solar system, it is the only world in our solar system with liquid water on the surface. Just slightly larger than nearby Venus, Earth is the biggest of the four planets closest to the Sun, all of which are made of rock and metal.</p>
  <p>The name Earth is at least 1,000 years old. All of the planets, except for Earth, were named after Greek and Roman gods and goddesses. However, the name Earth is a Germanic word, which simply means “the ground.”</p>
  <p>With a radius of 3,959 miles (6,371 kilometers), Earth is the biggest of the terrestrial planets, and the fifth largest planet overall.</p>
</section>
</main>
<div class="scrollbar"><div class="thumb"></div></div>
</div>
</body>
</html>
```

FILE: styles.css
```css
* { box-sizing: border-box; }
html, body { margin: 0; height: 100%; overflow: hidden; }
body {
  display: flex;
  flex-direction: column;
  background: #f6f6f4;
  color: #111;
  font-family: Lato, "Liberation Sans", sans-serif;
}
.topline {
  flex: none;
  height: 2px;
  background: #dfe0de;
  border-bottom: 1px solid #adb3b1;
}
.page { flex: 1; min-height: 0; display: flex; }

.sidebar {
  flex: none;
  width: 720px;
  padding: 129px 56px 0;
  background: #6699a4;
  color: #f6f6f4;
}
.brand {
  margin: 0 0 45px;
  padding-left: 1px;
  font-size: 64px;
  line-height: 78px;
  font-weight: 700;
  letter-spacing: .006em;
  word-spacing: -.07em;
  white-space: nowrap;
  color: transparent;
  -webkit-text-stroke: 2px #f6f6f4;
}
.nav { display: flex; flex-direction: column; align-items: flex-start; gap: 34px; }
.nav-link {
  font-size: 64px;
  line-height: 78px;
  letter-spacing: .005em;
  word-spacing: -.07em;
  -webkit-text-stroke: .7px #f6f6f4;
  text-underline-offset: 4px;
  text-decoration-thickness: 6px;
}
.nav-link.active { text-decoration-line: underline; text-decoration-skip-ink: none; }

.content { flex: 1; min-width: 0; overflow: hidden; }
.map { display: block; width: 2140px; height: 1198px; }
.shape path, .shape circle { vector-effect: non-scaling-stroke; }
.coast { fill: #607d8b; stroke: #607d8b; stroke-width: 2.6; stroke-linejoin: round; }
.ground { fill: #6699a4; }
.water { fill: #f6f6f4; stroke: #607d8b; stroke-width: 1.4; }
.isle { fill: #6699a4; stroke: #607d8b; stroke-width: 2; stroke-linejoin: round; }
.border { fill: none; stroke: #607d8b; stroke-width: 1.5; stroke-linejoin: round; }
.dots { fill: rgba(144, 180, 122, .8); stroke: #90b17a; stroke-width: 4; }

.about { padding: 15px 40px 0; }
.about-title {
  margin: 0 0 29px;
  font-size: 56px;
  line-height: 68px;
  font-weight: 700;
  letter-spacing: .004em;
  word-spacing: -.07em;
  color: #242422;
}
.about p {
  margin: 0 0 28px;
  font-size: 28px;
  line-height: 38px;
  letter-spacing: .006em;
  word-spacing: -.07em;
}

.scrollbar { flex: none; width: 20px; background: #dedfdc; }
.thumb { height: 1286px; border-radius: 10px; background: #a6a6a4; }
```
